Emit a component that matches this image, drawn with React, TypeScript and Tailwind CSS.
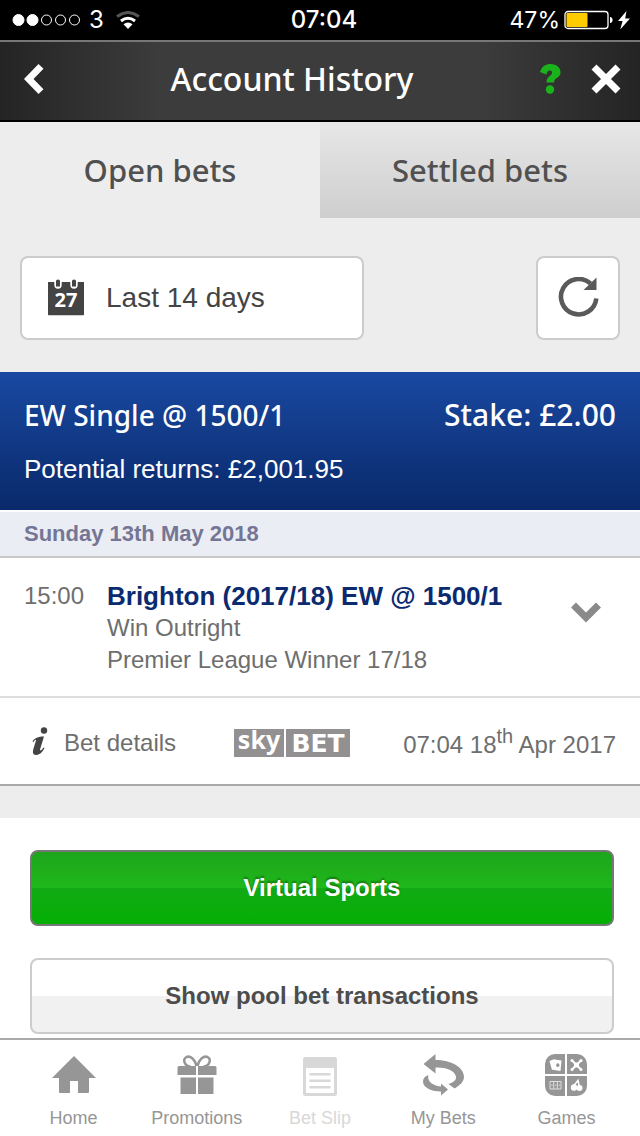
import { useState } from "react";
import type { ReactNode } from "react";

const sky = "font-['Noto_Sans',sans-serif] font-medium";

function StatusBar() {
  return (
    <div className="grid h-10 grid-cols-3 items-center bg-black px-3 font-['Inter',sans-serif] text-2xl text-white">
      <div className="flex items-center gap-2">
        <svg width="69" height="14" viewBox="0 0 69 14" fill="none" stroke="#fff">
          <circle cx="6.5" cy="7" r="5.5" fill="#fff" />
          <circle cx="20.5" cy="7" r="5.5" fill="#fff" />
          <circle cx="34.5" cy="7" r="5" />
          <circle cx="48.5" cy="7" r="5" />
          <circle cx="62.5" cy="7" r="5" />
        </svg>
        <span>3</span>
        <svg className="ml-1" width="24" height="18" viewBox="0 0 24 18" fill="none" strokeWidth="3">
          <path d="M1 5.500Q12 -2.500 23 5.500" stroke="#555" />
          <path d="M5 10Q12 4.500 19 10" stroke="#fff" />
          <path d="M7.500 13.300Q12 9.700 16.500 13.300L12 18Z" fill="#fff" />
        </svg>
      </div>
      <span className="pl-2 text-center font-medium">07:04</span>
      <div className="-mr-0.5 flex items-center justify-end gap-1">
        <span className="text-[23px]">47%</span>
        <svg width="66" height="20" viewBox="0 0 66 20">
          <rect x="1" y="1.500" width="43" height="17" rx="3" fill="none" stroke="#fff" strokeWidth="1.300" />
          <rect x="2.500" y="3" width="21" height="14" rx="1" fill="#fc0" />
          <path d="M46 7c3.500 0 3.500 6 0 6z" fill="#fff" />
          <path d="M62.500 1L54 11h4.600l-2.400 8.500L66 8.500h-4.800z" fill="#fff" />
        </svg>
      </div>
    </div>
  );
}

function Header() {
  return (
    <header className="h-[82px] border-t-2 border-b-2 border-t-[#777] border-b-black bg-[linear-gradient(90deg,#242424,#3c3c3c_25%,#3c3c3c_75%,#242424)]">
      <div className="flex h-full items-center justify-between px-[18px]">
        <div className="w-10">
          <button type="button" aria-label="Back" className="block px-1 pb-1">
            <svg width="22" height="30" viewBox="0 0 22 30" fill="#fff">
              <path d="M2 15L16.500 0L21.500 4.800L11.500 15L21.500 25.200L16.500 30Z" />
            </svg>
          </button>
        </div>
        <h1 className={`${sky} pb-1 text-[32px] text-white`}>Account History</h1>
        <div className="flex w-24 items-center justify-end gap-7 pb-1">
          <button type="button" aria-label="Help">
            <svg width="22" height="30" viewBox="0 0 22 30" fill="#1bb31b">
              <path d="M0 8C2 2 6 0 10.500 0C16.500 0 20.500 3.500 20.500 8.500C20.500 14 14 13.500 14 18.500H6.500C6.500 12 12 12 12 9C12 7 11 6.500 10 6.500C8 6.500 7 7.500 6.500 10.500Z" />
              <circle cx="10" cy="25.500" r="4.200" />
            </svg>
          </button>
          <button type="button" aria-label="Close">
            <svg width="32" height="30" viewBox="0 0 32 30" stroke="#fff" strokeWidth="7">
              <path d="M4 3L28 27M28 3L4 27" />
            </svg>
          </button>
        </div>
      </div>
    </header>
  );
}

function Tabs() {
  const [tab, setTab] = useState("Open bets");

  return (
    <div role="tablist" className="grid grid-cols-2">
      {["Open bets", "Settled bets"].map((name) => (
        <button
          key={name}
          type="button"
          role="tab"
          aria-selected={tab === name}
          onClick={() => setTab(name)}
          className={`${sky} h-24 text-[31px] text-[#505050] ${
            tab === name ? "" : "bg-linear-to-b from-[#e7e7e7] to-[#cecece]"
          }`}
        >
          {name}
        </button>
      ))}
    </div>
  );
}

function CalendarIcon() {
  return (
    <svg className="overflow-visible" width="36" height="36" viewBox="0 0 36 36">
      <path d="M0 2h36v32.500a.8.8 0 0 1-.8.8H.8a.8.8 0 0 1-.8-.8z" fill="#444" />
      <path d="M6.300 0v5a3.700 3.700 0 0 0 7.400 0v-5zM22.300 0v5a3.700 3.700 0 0 0 7.400 0v-5z" fill="#fff" />
      <path d="M8 1a2 1.500 0 0 1 4 0v5.500H8zM24 1a2 1.500 0 0 1 4 0v5.500h-4z" fill="#444" />
      <text x="18" y="27" textAnchor="middle" fontFamily="Noto Sans, sans-serif" fontWeight="700" fontSize="20" fill="#fff">
        27
      </text>
    </svg>
  );
}

function Filters() {
  const box = "flex h-[84px] items-center rounded-lg border-2 border-[#ccc] bg-white";
  return (
    <div className="flex items-center justify-between px-5 pt-[38px] pb-8">
      <button type="button" className={`${box} w-[344px] gap-[22px] px-[26px] text-[28px] text-[#444]`}>
        <CalendarIcon />
        Last 14 days
      </button>
      <button type="button" aria-label="Refresh" className={`${box} w-[84px] justify-center`}>
        <svg width="42" height="42" viewBox="0 0 42 42">
          <path d="M39.300 21.500A17.700 17.700 0 1 1 33.500 6.500" fill="none" stroke="#5a5a5a" strokeWidth="4.600" />
          <path d="M39.500 0.500v12.500H26.500z" fill="#5a5a5a" />
        </svg>
      </button>
    </div>
  );
}

function SkyBetLogo() {
  return (
    <svg role="img" aria-label="Sky Bet" className="ml-1 overflow-visible" width="116" height="28" viewBox="0 0 116 28">
      <rect width="50" height="28" fill="#929091" />
      <rect x="52" width="64" height="28" fill="#929091" />
      <text x="25" y="20" textAnchor="middle" fontFamily="Noto Sans, sans-serif" fontWeight="700" fontSize="25" fill="#fff">
        sky
      </text>
      <text x="84" y="23" textAnchor="middle" fontFamily="DejaVu Sans, sans-serif" fontWeight="700" fontSize="25" fill="#fff">
        BET
      </text>
    </svg>
  );
}

function BetCard() {
  return (
    <article className="border-b-2 border-[#aaa] bg-white">
      <div className="mb-0.5 flex h-[138px] flex-col gap-3.5 bg-linear-to-b from-[#1a49a2] to-[#09296a] px-6 pt-[23px] text-white">
        <div className={`${sky} flex justify-between leading-10`}>
          <h2 className="text-[28px] leading-10">EW Single @ 1500/1</h2>
          <span className="text-[30px] leading-10">Stake: £2.00</span>
        </div>
        <p className="text-[26px] leading-10">Potential returns: £2,001.95</p>
      </div>
      <h3 className="border-b-2 border-[#c8c8c8] bg-[#eaedf3] px-6 text-[22px] leading-[44px] font-bold text-[#757595]">
        Sunday 13th May 2018
      </h3>
      <div className="flex h-[140px] border-b-2 border-[#ddd] px-6 pt-[22px] text-2xl leading-8 text-[#6e6e6e]">
        <time className="w-[83px]">15:00</time>
        <div className="grow">
          <h4 className="text-[26px] leading-8 font-bold text-[#0b2a6f]">Brighton (2017/18) EW @ 1500/1</h4>
          <p>Win Outright</p>
          <p>Premier League Winner 17/18</p>
        </div>
        <button type="button" aria-label="Show more" className="mr-3.5 h-16">
          <svg width="32" height="22" viewBox="0 0 32 22" fill="none" stroke="#8a8a8a" strokeWidth="7">
            <path d="M3.500 4L16 16.500L28.500 4" />
          </svg>
        </button>
      </div>
      <div className="flex h-[86px] items-center justify-between px-6 pt-1 text-2xl text-[#6e6e6e]">
        <button type="button" className="flex items-center gap-4 pl-2">
          <svg className="mb-1" width="16" height="28" viewBox="0 0 16 28" fill="#444">
            <circle cx="12" cy="3.500" r="3.200" />
            <path d="M0.500 14.500C2.500 11 6 9.500 12 9.500L8 22.500C8 24.500 10 23 11.500 20.500L12.500 21C10 26 7 28 4 28C0.500 28 0.500 25 1.500 21.500L4 13.500C4 12 2.500 13 1.300 15.200Z" />
          </svg>
          Bet details
        </button>
        <SkyBetLogo />
        <time className="pt-1">
          07:04 18<sup className="text-xl">th</sup> Apr 2017
        </time>
      </div>
    </article>
  );
}

function NavItem({ label, muted, children }: { label: string; muted?: boolean; children: ReactNode }) {
  return (
    <a
      href="#"
      className={`flex flex-col items-center gap-2 pt-3.5 text-lg leading-6 ${muted ? "text-[#d8d8d8]" : "text-[#969696]"}`}
    >
      <svg width="44" height="44" viewBox="0 0 44 44" fill="currentColor">
        {children}
      </svg>
      {label}
    </a>
  );
}

function BottomNav() {
  return (
    <nav className="mt-auto grid h-[98px] grid-cols-5 border-t-2 border-[#aaa] bg-white px-3">
      <NavItem label="Home">
        <path d="M22 2L44 24H37V38a1 1 0 0 1-1 1H26V27H18V39H8a1 1 0 0 1-1-1V24H0z" />
      </NavItem>
      <NavItem label="Promotions">
        <g fill="none" stroke="currentColor" strokeWidth="2.500">
          <path d="M21.500 12C20 5 15 1.500 11.500 3C7.500 5 9 12 15.500 12.500" />
          <path d="M22.500 12C24 5 29 1.500 32.500 3C36.500 5 35 12 28.500 12.500" />
        </g>
        <path d="M4 12h17v9H2.500v-7.500A1.500 1.500 0 0 1 4 12zM23 12h17a1.500 1.500 0 0 1 1.500 1.500V21H23zM5.500 23.500H21v16.500H5.500zM23 23.500h15.500v16.500H23z" />
      </NavItem>
      <NavItem label="Bet Slip" muted>
        <path
          fillRule="evenodd"
          d="M7.500 3h29a2.500 2.500 0 0 1 2.500 2.500v34a2.500 2.500 0 0 1-2.500 2.500h-29a2.500 2.500 0 0 1-2.500-2.500v-34A2.500 2.500 0 0 1 7.500 3zM8 14v25h28V14z"
        />
        <path d="M11.500 19h21v2.500h-21zM11.500 25.500h21V28h-21zM11.500 32h21v2.500h-21z" />
      </NavItem>
      <NavItem label="My Bets">
        <path d="M2.500 10L14.500 0V6C30 6 43 13 43 23C43 28 38 32 33.500 34.500L27.500 30C33 28 35.500 26 35 22.500C33.500 16 24 13 14.500 13.500V19.500z" />
        <path d="M7.500 21C6 25 9 31.500 20 32.500V29.500L27 35.500L20 41.500V37.500C9 37.500 2 33 2 27.500C2 24.500 4 22 7.500 21z" />
      </NavItem>
      <NavItem label="Games">
        <path d="M11 0h10v20H1V10A10 10 0 0 1 11 0zM23 0h10a10 10 0 0 1 10 10v10H23zM1 22h20v20H11A10 10 0 0 1 1 32zM23 22h20v10a10 10 0 0 1-10 10H23z" />
        <path d="M5.500 7l5-2v10.500l-2.500.5zM10.500 5.500l7 1L16.500 17l-6.500-1z" fill="#fff" />
        <path d="M13.800 8.800l2 2.400-2 2.400-2-2.400z" />
        <g stroke="#fff" strokeWidth="2" fill="#fff">
          <path d="M28 6.500L37 15.500M37 6.500L28 15.500" />
          <rect x="31" y="9.500" width="3" height="3" />
          <g stroke="none">
            <circle cx="28" cy="6.500" r="1.500" />
            <circle cx="37" cy="6.500" r="1.500" />
            <circle cx="28" cy="15.500" r="1.500" />
            <circle cx="37" cy="15.500" r="1.500" />
          </g>
        </g>
        <path d="M6 27.500h11v7.500H6zM9.700 27.500v7.500M13.400 27.500v7.500M7.200 31.200h1.500M10.900 31.200h1.500M14.600 31.200h1.500" fill="none" stroke="#ddd" strokeWidth="1" />
        <path d="M29.500 32L34 26.500L35.500 33" fill="none" stroke="#fff" strokeWidth="1.500" />
        <circle cx="30" cy="33.500" r="3.200" fill="#fff" />
        <circle cx="35.500" cy="34" r="3" fill="#fff" />
      </NavItem>
    </nav>
  );
}

export default function App() {
  return (
    <div className="flex min-h-screen flex-col bg-[#ededed] font-['Liberation_Sans',Arial,sans-serif]">
      <StatusBar />
      <Header />
      <main>
        <Tabs />
        <Filters />
        <BetCard />
        <div className="mt-8 flex flex-col gap-8 bg-white pt-8 pr-[26px] pb-1 pl-[30px] text-2xl font-bold">
          <button
            type="button"
            className="h-[76px] rounded-lg border-2 border-[#777] bg-[linear-gradient(#1da51d,#1fb81a_50%,#12aa15_50%,#04b004)] text-white text-shadow-[0_-2px_2px_#00000055]"
          >
            Virtual Sports
          </button>
          <button
            type="button"
            className="h-[76px] rounded-lg border-2 border-[#ccc] bg-linear-to-b from-white from-50% to-[#f1f1f1] to-50% text-[#4c4c4c]"
          >
            Show pool bet transactions
          </button>
        </div>
      </main>
      <BottomNav />
    </div>
  );
}
